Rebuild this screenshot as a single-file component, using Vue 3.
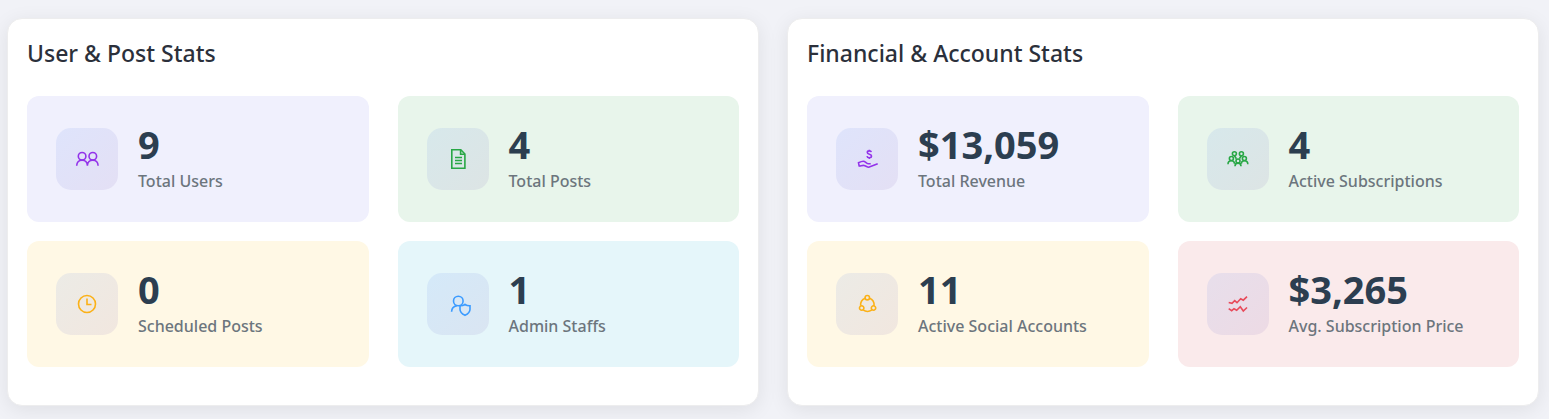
<script setup>
const panels = [
  {
    title: 'User & Post Stats',
    stats: [
      { value: '9', label: 'Total Users', tone: 'violet', icon: 'users' },
      { value: '4', label: 'Total Posts', tone: 'green', icon: 'post' },
      { value: '0', label: 'Scheduled Posts', tone: 'amber', icon: 'clock' },
      { value: '1', label: 'Admin Staffs', tone: 'blue', icon: 'admin' },
    ],
  },
  {
    title: 'Financial & Account Stats',
    stats: [
      { value: '$13,059', label: 'Total Revenue', tone: 'violet', icon: 'revenue' },
      { value: '4', label: 'Active Subscriptions', tone: 'green', icon: 'group' },
      { value: '11', label: 'Active Social Accounts', tone: 'amber', icon: 'social' },
      { value: '$3,265', label: 'Avg. Subscription Price', tone: 'red', icon: 'trend' },
    ],
  },
]

const icons = {
  users: [
    'M3.3 9.3a3.8 3.8 0 1 0 7.6 0a3.8 3.8 0 1 0 -7.6 0',
    'M14 9.3a3.8 3.8 0 1 0 7.6 0a3.8 3.8 0 1 0 -7.6 0',
    'M1.7 18.8c0-3.4 2.4-5.7 5.4-5.7s5.3 2.3 5.3 5.7c0-3.4 2.4-5.7 5.4-5.7s5.3 2.3 5.3 5.7',
  ],
  post: [
    'M5.8 2.8h9l4.1 4.2v14.2h-13.1z',
    'M14.6 3v4.3h4.2',
    'M9 10.5h7M9 13.5h7M9 16.5h7',
  ],
  clock: ['M3.5 12a8.5 8.5 0 1 0 17 0a8.5 8.5 0 1 0 -17 0', 'M12 6.5v6h4.5'],
  admin: [
    'M7.5 9a4.8 4.8 0 1 0 9.6 0a4.8 4.8 0 1 0 -9.6 0',
    'M5.6 19.8c0-3.2 2-5.5 5.2-6.2',
    'M19 12.3c1.6 1.2 3.3 1.6 5 1.5v3.5c0 2.8-2 4.7-5 6c-3-1.300-5-3.200-5-6v-3.500c1.700.1 3.400-.3 5-1.500z',
  ],
  revenue: [
    'M16.300 5.200c-.2-.9-1-1.300-2-1.300c-1.200 0-2 .6-2 1.600c0 2.400 4.200 1.200 4.200 3.500c0 1-.9 1.700-2.200 1.700c-1.200 0-2.100-.5-2.300-1.600M14.300 2.800v1.200M14.300 10.600v1.400',
    'M4.300 19.500l-.8-3.700c1.600-.8 3.200-1.500 4.800-1.500c1.700 0 2.600 1.700 4.200 2.300c1 .3 2 .2 3.200.2',
    'M4.300 19.300c1.700-.2 3.200-1.300 4.700-.9c1.600.4 3.200 1.800 4.700 1.800l9-3.500',
  ],
  group: [
    'M6.400 6.700a2 2 0 1 0 4 0a2 2 0 1 0 -4 0',
    'M13.400 6.700a2 2 0 1 0 4 0a2 2 0 1 0 -4 0',
    'M3.400 11.500a2 2 0 1 0 4 0a2 2 0 1 0 -4 0',
    'M16.400 11.500a2 2 0 1 0 4 0a2 2 0 1 0 -4 0',
    'M10 14a2 2 0 1 0 4 0a2 2 0 1 0 -4 0',
    'M2 17.200c0-2.200 1.200-3.500 3.300-3.500s3.200 1.300 3.200 3M21.800 17.200c0-2.200-1.200-3.500-3.300-3.500s-3.200 1.300-3.200 3M9 19.300c0-2.100 1.100-3.200 3-3.200s3 1.100 3 3.200',
    'M8.500 8.800l1.900 3M15.300 8.800l-1.900 3',
  ],
  social: [
    'M10.100 5.700a2.200 2.200 0 1 0 4.400 0a2.200 2.200 0 1 0 -4.400 0',
    'M4.500 16a2.200 2.200 0 1 0 4.400 0a2.200 2.200 0 1 0 -4.400 0',
    'M16.300 16a2.200 2.200 0 1 0 4.400 0a2.200 2.200 0 1 0 -4.400 0',
    'M10.200 6.200c-2.800 1-4.800 3.700-4.600 7.500M14.500 6.200c2.800 1 4.800 3.700 4.600 7.500M8 17.900c2.700 1.900 6.200 1.900 9 0',
  ],
  trend: [
    'M2.700 10.500l3.300.8l2.700-2.600l2.300 2l3.700-4l2.600 1.500l3.700-3.500',
    'M2.700 16.700l3 2l2.300-2l2.700 1.600l3.600-3.600l3 4.300l3.700-3.500',
  ],
}
</script>

<template>
  <main class="dashboard">
    <section v-for="panel in panels" :key="panel.title" class="panel">
      <h2 class="title">{{ panel.title }}</h2>
      <div class="grid">
        <article v-for="stat in panel.stats" :key="stat.label" class="tile" :class="stat.tone">
          <div class="badge">
            <svg viewBox="0 0 24 24" aria-hidden="true">
              <path v-for="d in icons[stat.icon]" :key="d" :d="d" />
            </svg>
          </div>
          <div class="text">
            <div class="value">{{ stat.value }}</div>
            <div class="label">{{ stat.label }}</div>
          </div>
        </article>
      </div>
    </section>
  </main>
</template>

<style>
body {
  background: #f1f2f7;
}
</style>

<style scoped>
.dashboard {
  display: grid;
  grid-template-columns: 1fr 1fr;
  gap: 28px;
  padding: 18px 10px 13px 7px;
  font-family: 'Segoe UI', 'Noto Sans', 'Open Sans', sans-serif;
}
.panel {
  padding: 18px 19px 38px;
  background: #fff;
  border: 1px solid #ededee;
  border-radius: 15px;
  box-shadow: 0 4px 20px rgba(0, 0, 0, 0.08);
}
.title {
  margin: 0 0 27px;
  font-size: 23px;
  font-weight: 500;
  line-height: 32px;
  color: #2b303b;
}
.grid {
  display: grid;
  grid-template-columns: 1fr 1fr;
  gap: 19px 29px;
}
.tile {
  display: flex;
  align-items: center;
  gap: 20px;
  padding: 27px 29px;
  border-radius: 12px;
}
.badge {
  display: flex;
  flex: none;
  align-items: center;
  justify-content: center;
  width: 62px;
  height: 62px;
  border-radius: 15px;
  background: linear-gradient(135deg, rgba(67, 121, 238, 0.1), rgba(120, 80, 170, 0.1));
}
svg {
  width: 24px;
  height: 24px;
  overflow: visible;
  fill: none;
  stroke: currentColor;
  stroke-width: 1.6;
}
.text {
  padding-bottom: 2px;
}
.value {
  margin-bottom: 4px;
  font-size: 38px;
  font-weight: 700;
  line-height: 42px;
  color: #2c3e50;
}
.label {
  font-size: 16px;
  font-weight: 500;
  line-height: 24px;
  color: #6c757d;
  white-space: nowrap;
}
.violet { background: #f0f0fd; color: #9333ea; }
.green { background: #e8f5eb; color: #28a745; }
.amber { background: #fff8e5; color: #fbb117; }
.blue { background: #e5f6fa; color: #3b9bff; }
.red { background: #faeaeb; color: #e84a5a; }
</style>
